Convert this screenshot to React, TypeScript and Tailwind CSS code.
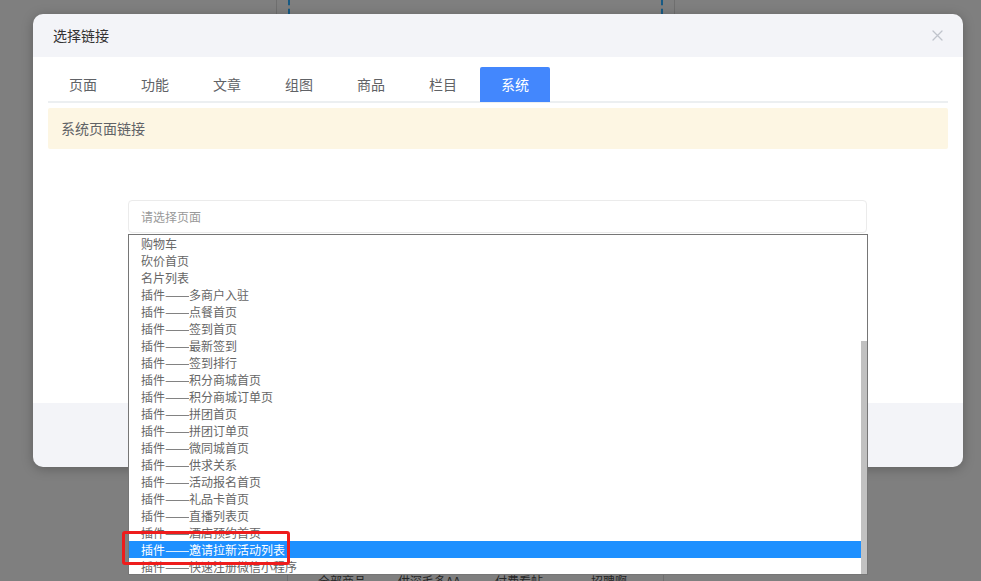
import React from "react"

const tabs = ["页面", "功能", "文章", "组图", "商品", "栏目", "系统"]

const pages = [
  "购物车",
  "砍价首页",
  "名片列表",
  "插件——多商户入驻",
  "插件——点餐首页",
  "插件——签到首页",
  "插件——最新签到",
  "插件——签到排行",
  "插件——积分商城首页",
  "插件——积分商城订单页",
  "插件——拼团首页",
  "插件——拼团订单页",
  "插件——微同城首页",
  "插件——供求关系",
  "插件——活动报名首页",
  "插件——礼品卡首页",
  "插件——直播列表页",
  "插件——酒店预约首页",
  "插件——邀请拉新活动列表",
  "插件——快速注册微信小程序",
]

const selected = "插件——邀请拉新活动列表"

function CloseIcon() {
  return (
    <svg width="11" height="11" viewBox="0 0 11 11" fill="none">
      <path d="M1 1L10 10M10 1L1 10" stroke="#c0c4cc" strokeWidth="1.3" strokeLinecap="round" />
    </svg>
  )
}

// the em dashes in the reference are full width, stretch them to 2em
function PageLabel({ text }: { text: string }) {
  const parts = text.split("——")
  if (parts.length < 2) return <>{text}</>
  return (
    <>
      {parts[0]}
      <span className="inline-block w-[24px] overflow-hidden align-top">
        <span className="inline-block origin-left scale-x-[1.25]">——</span>
      </span>
      {parts[1]}
    </>
  )
}

function Backdrop() {
  return (
    <>
      <div className="absolute left-[276px] top-0 h-[14px] w-px bg-[#6f6f6f]" />
      <div className="absolute left-[288px] top-0 h-[14px] border-l-2 border-dashed border-[#175a84]" />
      <div className="absolute left-[661px] top-0 h-[14px] border-l-2 border-dashed border-[#175a84]" />
      <div className="absolute left-[674px] top-0 h-[14px] w-px bg-[#6f6f6f]" />
      <div className="absolute left-[287px] top-[575px] h-[6px] w-px bg-[#6f6f6f]" />
      <div className="absolute left-[663px] top-[575px] h-[6px] w-px bg-[#6f6f6f]" />
      <div className="absolute left-[318px] top-[572px] flex text-[12px] leading-[17px] text-[#262626]">
        <span className="w-[80px]">全部商品</span>
        <span className="w-[97px]">供深毛多AA</span>
        <span className="w-[96px]">付费看帖</span>
        <span>招聘啊</span>
      </div>
    </>
  )
}

export default function App() {
  return (
    <div
      className="relative h-[581px] w-[981px] overflow-hidden bg-[#7f7f7f] pl-[33px] pt-[14px]"
      style={{ fontFamily: '"Noto Sans CJK SC", "Noto Sans", sans-serif' }}
    >
      <Backdrop />

      <div className="relative w-[930px] rounded-[10px] shadow-[0_2px_12px_rgba(0,0,0,0.25)]">
        <div className="flex h-[43px] items-center justify-between rounded-t-[10px] bg-[#f3f4f8] pl-[20px] pr-[20px]">
          <span className="text-[14px] text-[#333]">选择链接</span>
          <CloseIcon />
        </div>

        <div className="h-[346px] bg-white px-[15px] pt-[10px]">
          <div className="flex h-[36px] border-b-2 border-[#eceff1]">
            {tabs.map((t, i) => (
              <div
                key={t}
                className={
                  (i === 0 ? "mr-px " : "mx-px ") +
                  (t === "系统"
                    ? "flex h-[35px] w-[70px] items-center justify-center rounded-t-[2px] bg-[#4387fd] text-[14px] text-white"
                    : "flex h-[35px] w-[70px] items-center justify-center text-[14px] text-[#606266]")
                }
              >
                {t}
              </div>
            ))}
          </div>

          <div className="mt-[5px] flex h-[41px] items-center rounded-[2px] bg-[#fdf6e3] px-[13px] text-[14px] text-[#606266]">
            系统页面链接
          </div>

          <div className="relative ml-[80px] mt-[51px] w-[739px]">
            <div className="flex h-[33px] items-center rounded-[4px] border border-[#ebebeb] px-[12px] text-[12px] text-[#999]">
              请选择页面
            </div>

            <div className="absolute left-0 top-[34px] z-10 flex h-[341px] w-[740px] border border-[#767676] bg-white">
              <div className="flex flex-1 flex-col overflow-hidden">
                {pages.map((p) => (
                  <div
                    key={p}
                    className={
                      p === selected
                        ? "h-[17px] shrink-0 whitespace-nowrap bg-[#1e90ff] pl-[12px] text-[12px] leading-[17px] text-white"
                        : "h-[17px] shrink-0 whitespace-nowrap pl-[12px] text-[12px] leading-[17px] text-[#666]"
                    }
                  >
                    <PageLabel text={p} />
                  </div>
                ))}
              </div>
              <div className="flex w-[6px] flex-col pt-[106px]">
                <div className="flex-1 bg-[#c1c1c1]" />
              </div>
            </div>
          </div>
        </div>

        <div className="h-[64px] rounded-b-[10px] bg-[#f3f4f8]" />
      </div>

      <div className="absolute left-[122px] top-[531px] z-20 h-[34px] w-[168px] rounded-[3px] border-[3px] border-[#ee1c1c]" />
    </div>
  )
}
